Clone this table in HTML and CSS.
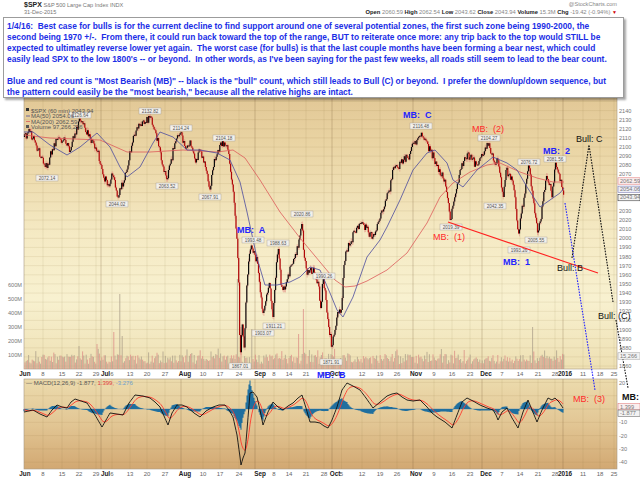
FILE: index.html
```html
<!DOCTYPE html>
<html lang="en">
<head>
<meta charset="utf-8">
<title>$SPX 60 min</title>
<link rel="stylesheet" href="styles.css">
</head>
<body>
<div class="page">
  <header class="head">
    <div class="head-left">
      <div class="title"><b class="sym">$SPX</b> <span class="name">S&amp;P 500 Large Cap Index INDX</span></div>
      <div class="date">31-Dec-2015</div>
    </div>
    <div class="head-right">
      <div class="brand">@StockCharts.com</div>
      <div class="ohlc"><b>Open</b> 2060.59 <b>High</b> 2062.54 <b>Low</b> 2043.62 <b>Close</b> 2043.94 <b>Volume</b> 15.3M <b>Chg</b> -19.42 (-0.94%) <span class="down">▼</span></div>
    </div>
  </header>
  <svg id="chart" class="chart" width="640" height="462" viewBox="0 17 640 462"></svg>
  <div class="note">1/4/16:  Best case for bulls is for the current decline to find support around one of several potential zones, the first such zone being 1990-2000, the
second being 1970 +/-.  From there, it could run back toward the top of the range, BUT to reiterate once more: any trip back to the top would STILL be
expected to ultimatley reverse lower yet again.  The worst case (for bulls) is that the last couple months have been forming a bear nest, which could
easily lead SPX to the low 1800's -- or beyond.  In other words, as I've been saying for the past few weeks, all roads still seem to lead to the bear count.

Blue and red count is "Most Bearish (MB)" -- black is the "bull" count, which still leads to Bull (C) or beyond.  I prefer the down/up/down sequence, but
the pattern could easily be the "most bearish," because all the relative highs are intact.</div>
</div>
<script src="script.js"></script>
</body>
</html>
```

FILE: styles.css
```css
html, body {
  margin: 0;
  padding: 0;
  background: #ffffff;
}
.page {
  position: relative;
  width: 640px;
  height: 479px;
  overflow: hidden;
  font-family: "Liberation Sans", Arial, sans-serif;
}
.head {
  display: flex;
  justify-content: space-between;
  height: 17px;
  padding: 0 23px 0 24px;
  box-sizing: border-box;
  color: #666;
  font-size: 5.6px;
  line-height: 7px;
}
.head-left {
  display: flex;
  flex-direction: column;
  padding-top: 1px;
}
.sym {
  font-size: 7px;
  color: #222;
}
.name { color: #777; }
.date { color: #777; }
.head-right {
  display: flex;
  flex-direction: column;
  align-items: flex-end;
  padding-top: 1px;
}
.brand { color: #888; }
.ohlc {
  color: #888;
  font-size: 5.8px;
  margin-top: 1px;
}
.ohlc b { color: #222; }
.down { color: #d00000; font-size: 5px; }
.chart {
  display: block;
}
.note {
  position: absolute;
  left: 3px;
  top: 17px;
  width: 621px;
  height: 81px;
  box-sizing: border-box;
  background: #ffffff;
  border: 1px solid #9c9c9c;
  box-shadow: 2px 2px 2px rgba(0, 0, 0, 0.35);
  padding: 3px 0 0 3px;
  color: #1b2ee6;
  font-weight: bold;
  font-size: 8.4px;
  line-height: 11px;
  white-space: pre;
}
.chart text { font-family: "Liberation Sans", Arial, sans-serif; }
.ax { font-size: 5.6px; fill: #777; }
.dt { font-size: 6px; fill: #666; }
.dtm { font-size: 6.4px; fill: #222; font-weight: bold; }
.lbl { font-size: 4.6px; fill: #555; }
.leg { font-size: 6px; fill: #555; }
.leg-red { fill: #e24040; }
.leg-blue { fill: #6f9fcf; }
.ann { font-size: 9px; white-space: pre; }
.ann-blue { fill: #2424ff; font-weight: bold; }
.ann-red { fill: #ff2a2a; }
.ann-black { fill: #111; }
.ann-bold { font-weight: bold; }
```

FILE: script.js
```js
(function () {
  var NS = 'http://www.w3.org/2000/svg';
  var svg = document.getElementById('chart');
  function add(tag, attrs, parent, text) {
    var e = document.createElementNS(NS, tag);
    for (var k in attrs) e.setAttribute(k, attrs[k]);
    if (text !== undefined) e.textContent = text;
    (parent || svg).appendChild(e);
    return e;
  }
  var seed = 987654;
  function rnd() { seed = (seed * 1103515245 + 12345) % 2147483648; return seed / 2147483648; }
  function interp(pts, x) {
    if (x <= pts[0][0]) return pts[0][1];
    for (var i = 1; i < pts.length; i++) {
      if (x <= pts[i][0]) {
        var a = pts[i - 1], b = pts[i];
        var t = (x - a[0]) / (b[0] - a[0]);
        return a[1] + (b[1] - a[1]) * t;
      }
    }
    return pts[pts.length - 1][1];
  }
  var L = 24, R = 617, PT = 17, PB = 369, MT = 379, MBt = 469;
  function yP(p) { return 238.3 - (p - 2000) * 0.9125; }
  function yM(v) { return 409 - v * 1.33; }

  // gradients
  var defs = add('defs', {});
  var g1 = add('linearGradient', { id: 'gp', x1: 0, y1: 0, x2: 0, y2: 1 }, defs);
  [['0', '#d5b380'], ['0.35', '#e9d3a2'], ['0.62', '#f5eac4'], ['0.8', '#f8f1d0'], ['1', '#eee0b3']].forEach(function (s) {
    add('stop', { offset: s[0], 'stop-color': s[1] }, g1);
  });
  var g2 = add('linearGradient', { id: 'gm', x1: 0, y1: 0, x2: 0, y2: 1 }, defs);
  [['0', '#ecdbad'], ['0.5', '#e2c694'], ['1', '#d2a872']].forEach(function (s) {
    add('stop', { offset: s[0], 'stop-color': s[1] }, g2);
  });
  add('rect', { x: L, y: PT, width: R - L, height: PB - PT, fill: 'url(#gp)', stroke: '#a89a86', 'stroke-width': 0.6 });
  add('rect', { x: L, y: MT, width: R - L, height: MBt - MT, fill: 'url(#gm)', stroke: '#a89a86', 'stroke-width': 0.6 });

  // grid
  var grid = add('g', { stroke: 'rgba(140,105,55,0.22)', 'stroke-width': 0.5 });
  for (var p = 1850; p <= 2260; p += 10) {
    var y = yP(p);
    if (y > PT + 1 && y < PB - 1) add('line', { x1: L, x2: R, y1: y, y2: y }, grid);
  }
  for (var v = -40; v <= 20; v += 10) {
    var ym = yM(v);
    add('line', { x1: L, x2: R, y1: ym, y2: ym }, grid);
  }
  var dates = [
    [25, 'Jun', 1], [43, '8'], [62, '15'], [79, '22'], [96, '29'], [105.5, 'Jul', 1], [112, '6'], [130, '13'], [147, '20'], [165, '27'],
    [185, 'Aug', 1], [203, '10'], [220, '17'], [239, '24'], [260, 'Sep', 1], [274, '8'], [289, '14'], [306, '21'], [324, '28'],
    [335, 'Oct', 1], [341.5, '5'], [362, '12'], [380, '19'], [397, '26'], [416, 'Nov', 1], [434, '9'], [452, '16'], [470, '23'],
    [486, 'Dec', 1], [502, '7'], [520, '14'], [538, '21'], [555, '28'], [565, '2016', 1], [583, '11'], [600, '18'], [614, '25']
  ];
  var monthX = [101, 181, 255, 332, 413, 482, 563];
  dates.forEach(function (d) {
    if (!d[2] && d[0] > L + 2 && d[0] < R) {
      add('line', { x1: d[0], x2: d[0], y1: PT, y2: PB }, grid);
      add('line', { x1: d[0], x2: d[0], y1: MT, y2: MBt }, grid);
    }
  });
  var mgrid = add('g', { stroke: 'rgba(120,90,50,0.35)', 'stroke-width': 0.8 });
  monthX.forEach(function (x) {
    add('line', { x1: x, x2: x, y1: PT, y2: PB }, mgrid);
    add('line', { x1: x, x2: x, y1: MT, y2: MBt }, mgrid);
  });

  // volume
  var spikes = { 76: 47, 79: 23, 97: 25, 114: 37, 120: 75, 122: 33, 237: 90, 241: 42, 252: 40, 262: 33, 299: 35, 303: 60, 441: 20, 533: 42 };
  var vg = '', vr = '';
  var i = 0;
  for (var x = 25; x <= 564; x += 1.2) {
    var h = 5 + rnd() * 10 + (rnd() < 0.12 ? 6 : 0);
    var xi = Math.round(x);
    if (spikes[xi] && Math.abs(x - xi) < 0.65) h = spikes[xi];
    var seg = 'M' + x.toFixed(2) + ' ' + PB + 'V' + (PB - h).toFixed(1);
    if ((i++ % 2) === 0) vr += seg; else vg += seg;
  }
  add('path', { d: vg, stroke: '#ab9f8a', 'stroke-width': 0.9, opacity: 0.85 });
  add('path', { d: vr, stroke: '#dc8c86', 'stroke-width': 0.9, opacity: 0.85 });

  // price candles
  var price = [[24,137],[30,132],[36,145],[42,158],[47,168],[52,150],[58,138],[65,140],[70,152],[75,133],[80,120],[85,128],[90,138],[97,150],[103,175],[108,185],[113,175],[117,197],[121,188],[126,175],[130,150],[135,135],[140,125],[145,122],[150,117],[155,130],[160,150],[164,172],[167,180],[171,160],[176,140],[181,133],[186,150],[190,140],[195,160],[200,150],[205,165],[210,190],[214,160],[218,150],[224,142],[228,150],[231,175],[234,200],[237,240],[239,290],[240,365],[242,320],[244,350],[246,300],[248,270],[250,250],[252,248],[255,255],[258,265],[260,290],[263,313],[266,300],[269,280],[271,300],[273,318],[275,285],[278,245],[281,285],[285,290],[288,275],[292,265],[296,255],[300,235],[302,222],[304,255],[307,275],[310,270],[314,272],[318,282],[321,312],[323,275],[326,300],[329,330],[332,347],[335,330],[338,310],[341,315],[344,265],[346,250],[350,245],[355,230],[360,223],[364,225],[368,232],[373,237],[377,225],[382,210],[386,200],[390,190],[393,167],[398,168],[403,160],[408,158],[411,150],[414,143],[418,138],[421,132],[425,140],[430,150],[434,158],[437,167],[441,175],[445,180],[447,195],[449,210],[451,220],[453,205],[457,185],[461,170],[464,160],[467,153],[472,160],[476,165],[480,158],[484,152],[489,143],[492,155],[495,165],[498,160],[501,180],[503,200],[506,170],[509,175],[513,183],[516,210],[519,237],[521,215],[525,193],[529,165],[532,190],[535,215],[538,232],[541,220],[544,190],[547,178],[550,185],[552,198],[555,165],[558,172],[561,180],[564,197]];
  var keyX = {};
  price.forEach(function (pt) { keyX[pt[0]] = 1; });
  var up = '', dn = '', wk = '';
  var prev = price[0][1];
  for (var cx = 24.5; cx <= 564; cx += 0.9) {
    var base = interp(price, cx);
    var near = keyX[Math.round(cx)] && Math.abs(cx - Math.round(cx)) < 0.46;
    var c = near ? base : base + (rnd() - 0.5) * 8;
    var o = prev;
    if (Math.abs(c - o) < 0.8) c = o + (rnd() < 0.5 ? 1 : -1);
    var hi = Math.min(o, c) - rnd() * 3, lo = Math.max(o, c) + rnd() * 3;
    wk += 'M' + cx.toFixed(2) + ' ' + hi.toFixed(1) + 'V' + lo.toFixed(1);
    var s = 'M' + cx.toFixed(2) + ' ' + o.toFixed(1) + 'V' + c.toFixed(1);
    if (c < o) up += s; else dn += s;
    prev = c;
  }
  add('path', { d: wk, stroke: '#e28b82', 'stroke-width': 0.55 });
  add('path', { d: dn, stroke: '#b00808', 'stroke-width': 1.2 });
  add('path', { d: up, stroke: '#0c0c0c', 'stroke-width': 1.2 });

  // moving averages
  function poly(pts, color, w) {
    return add('polyline', { points: pts.map(function (q) { return q[0] + ',' + q[1]; }).join(' '), fill: 'none', stroke: color, 'stroke-width': w });
  }
  var ma50 = [[24,132],[33,132],[50,145],[67,155],[80,147],[97,133],[110,147],[120,167],[127,177],[140,167],[153,143],[160,132],[173,137],[187,150],[200,150],[217,153],[230,160],[240,182],[247,212],[257,258],[265,285],[277,285],[290,282],[300,277],[310,267],[320,270],[330,293],[337,310],[343,317],[353,297],[367,257],[380,240],[387,227],[400,200],[413,170],[427,153],[435,150],[447,163],[453,180],[463,187],[477,170],[493,157],[507,163],[517,170],[527,187],[540,207],[550,200],[560,193],[564,188]];
  var ma200 = [[24,135],[50,138],[100,140],[127,152],[150,152],[183,150],[217,152],[233,150],[245,158],[260,180],[280,212],[300,238],[320,262],[335,280],[345,287],[355,286],[367,281],[387,270],[407,253],[427,223],[440,197],[453,183],[470,172],[487,165],[500,163],[520,172],[537,178],[553,182],[564,182]];
  poly(ma200, '#dd5a5a', 0.8);
  poly(ma50, '#4b4b9e', 0.8);

  // boxed price labels
  var plabels = [[47,178,'2072.14'],[80,115,'2126.64'],[117,204,'2044.02'],[150,111,'2132.82'],[167,186,'2063.52'],[181,128,'2114.24'],[210,197,'2067.91'],[224,138,'2104.18'],[240,366,'1867.01'],[253,240,'1993.48'],[263,333,'1903.07'],[274,326,'1911.21'],[278,243,'1988.63'],[302,214,'2020.86'],[324,276,'1990.26'],[331,362,'1871.91'],[421,126,'2116.48'],[451,227,'2019.39'],[489,138,'2104.27'],[495,206,'2042.35'],[519,250,'1993.26'],[529,162,'2076.72'],[536,240,'2005.55'],[555,159,'2081.56']];
  var lg = add('g', {});
  plabels.forEach(function (l) {
    add('rect', { x: l[0] - 11, y: l[1] - 3, width: 22, height: 6, fill: '#f3f0ea', stroke: '#a09a94', 'stroke-width': 0.4 }, lg);
    add('text', { x: l[0], y: l[1] + 1.7, 'text-anchor': 'middle', 'class': 'lbl' }, lg, l[2]);
  });

  // trendline & projections
  add('line', { x1: 448, y1: 222, x2: 598, y2: 273, stroke: '#ff2020', 'stroke-width': 1.1 });
  add('polyline', { points: '565,203 595,390', fill: 'none', stroke: '#2222ff', 'stroke-width': 1.1, 'stroke-dasharray': '1.6 1.2' });
  add('polyline', { points: '572,258 589,145 613,302', fill: 'none', stroke: '#111', 'stroke-width': 1.1, 'stroke-dasharray': '1.6 1.2' });
  add('polyline', { points: '616,320 628,388', fill: 'none', stroke: '#111', 'stroke-width': 1.1, 'stroke-dasharray': '1.6 1.2' });

  // legends
  var lgd = add('g', {});
  add('rect', { x: 26, y: 108, width: 3, height: 3, fill: '#333' }, lgd);
  add('text', { x: 31, y: 112.5, 'class': 'leg' }, lgd, '$SPX (60 min) 2043.94');
  add('line', { x1: 26, x2: 30, y1: 116, y2: 116, stroke: '#4b4b9e', 'stroke-width': 0.8 }, lgd);
  add('text', { x: 31, y: 118, 'class': 'leg' }, lgd, 'MA(50) 2054.06');
  add('line', { x1: 26, x2: 30, y1: 121.5, y2: 121.5, stroke: '#dd5a5a', 'stroke-width': 0.8 }, lgd);
  add('text', { x: 31, y: 123.5, 'class': 'leg' }, lgd, 'MA(200) 2062.59');
  add('rect', { x: 26, y: 125, width: 3, height: 3, fill: '#555' }, lgd);
  add('text', { x: 31, y: 129, 'class': 'leg' }, lgd, 'Volume 97,266,256');

  // MACD
  var macd = [[24,412],[33,410],[40,414],[47,417],[52,410],[57,405],[62,407],[67,408],[71,402],[75,399],[81,401],[87,403],[95,415],[102,427],[106,420],[110,413],[117,414],[123,415],[129,403],[135,395],[143,396],[150,398],[155,402],[160,407],[164,416],[168,425],[172,413],[177,405],[182,405],[187,407],[194,413],[200,417],[206,411],[213,407],[219,405],[225,405],[229,410],[233,417],[237,435],[240,457],[241,465],[243,458],[245,453],[247,430],[250,393],[253,392],[257,397],[260,410],[263,425],[268,412],[273,402],[278,407],[283,410],[288,406],[293,403],[298,398],[302,395],[306,408],[310,422],[315,422],[320,423],[324,426],[328,428],[332,420],[337,407],[342,390],[347,383],[353,386],[360,390],[366,398],[373,408],[380,402],[387,396],[392,394],[397,393],[402,397],[407,400],[413,401],[420,400],[427,407],[432,413],[437,417],[445,422],[452,428],[457,415],[462,402],[467,398],[473,401],[480,405],[487,408],[493,410],[496,415],[498,420],[502,412],[507,408],[512,418],[518,428],[523,412],[528,400],[532,410],[537,422],[542,410],[548,398],[552,400],[555,398],[559,402],[563,408]];
  var mline = [], sline = [], hist = '';
  var sig = 409;
  for (var mx = 24; mx <= 563; mx += 1) {
    var mv = interp(macd, mx);
    sig = sig + (mv - sig) * 0.2;
    mline.push([mx, mv.toFixed(1)]);
    sline.push([mx, sig.toFixed(1)]);
    var hv = (sig - mv) * 0.9;
    if (Math.abs(hv) > 0.3) hist += 'M' + mx + ' 409V' + (409 - hv).toFixed(1);
  }
  add('line', { x1: L, x2: 564, y1: 409, y2: 409, stroke: '#7ea0bd', 'stroke-width': 0.6 });
  add('path', { d: hist, stroke: '#1f6f9f', 'stroke-width': 1.05 });
  poly(sline, '#ff3b2f', 0.9);
  poly(mline, '#111', 0.9);
  var ml = add('text', { x: 26, y: 385, 'class': 'leg' });
  add('tspan', {}, ml, '\u2014 MACD(12,26,9) -1.877, ');
  add('tspan', { 'class': 'leg-red' }, ml, '1.399, ');
  add('tspan', { 'class': 'leg-blue' }, ml, '-3.276');

  // axes: price
  var ax = add('g', {});
  for (var pp = 1860; pp <= 2140; pp += 10) {
    if (pp === 2060 || pp === 2050 || pp === 2040 || pp === 1870) continue;
    add('text', { x: 619, y: yP(pp) + 2, 'class': 'ax' }, ax, String(pp));
  }
  [[285, '600M'], [299, '500M'], [313, '400M'], [327, '300M'], [341, '200M'], [355, '100M']].forEach(function (t) {
    add('text', { x: 22, y: t[0] + 2, 'text-anchor': 'end', 'class': 'ax' }, ax, t[1]);
  });
  [[383, '20'], [422, '-10'], [436, '-20'], [449, '-30'], [462, '-40']].forEach(function (t) {
    add('text', { x: 619, y: t[0] + 2, 'class': 'ax' }, ax, t[1]);
  });
  function rbox(y, txt, stroke, fill) {
    add('rect', { x: 618, y: y - 3.2, width: 22, height: 6.4, fill: fill, stroke: stroke, 'stroke-width': 0.5 }, ax);
    add('text', { x: 620, y: y + 1.8, 'class': 'ax' }, ax, txt);
  }
  rbox(181, '2062.59', '#e07070', '#fbeeee');
  rbox(189.3, '2054.06', '#6a6aa8', '#eeeef6');
  rbox(197.6, '2043.94', '#222', '#f2f2f2');
  rbox(356, '15,266', '#999', '#f4f4f4');
  rbox(406.7, '1.399', '#e07070', '#fbeeee');
  rbox(413.2, '-1.877', '#555', '#f2f2f2');

  // date axes
  [376, 476].forEach(function (yy) {
    dates.forEach(function (d) {
      add('text', { x: d[0], y: yy, 'text-anchor': 'middle', 'class': d[2] ? 'dtm' : 'dt' }, ax, d[1]);
    });
  });

  // annotations
  function ann(x, y, txt, cls) { add('text', { x: x, y: y, 'class': 'ann ' + cls }, svg, txt); }
  ann(237, 233, 'MB:  A', 'ann-blue');
  ann(403, 118, 'MB:  C', 'ann-blue');
  ann(543, 154, 'MB:  2', 'ann-blue');
  ann(503, 265, 'MB:  1', 'ann-blue');
  ann(317, 377.5, 'MB:  B', 'ann-blue');
  ann(472, 132, 'MB:  (2)', 'ann-red');
  ann(433, 240, 'MB:  (1)', 'ann-red');
  ann(573, 402, 'MB:  (3)', 'ann-red');
  ann(576, 142, 'Bull: C', 'ann-black');
  ann(557, 271, 'Bull: B', 'ann-black');
  ann(598, 319, 'Bull: (C)', 'ann-black');
  ann(622, 400, 'MB:', 'ann-black ann-bold');
})();
```
